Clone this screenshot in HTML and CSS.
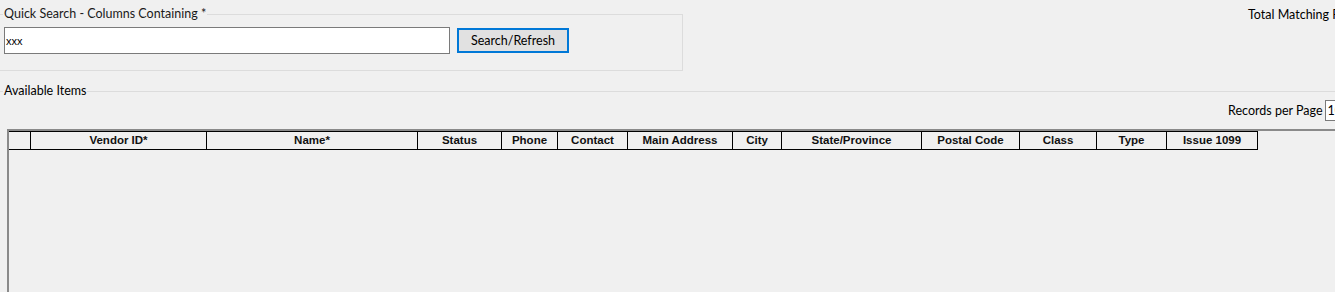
FILE: index.html
```html
<!DOCTYPE html>
<html lang="en">
<head>
    <meta charset="UTF-8">
    <title>Available Items</title>
    <link rel="stylesheet" href="styles.css">
</head>
<body>
    <div class="top">
        <fieldset class="search">
            <legend>Quick Search - Columns Containing *</legend>
            <input class="search-input" type="text" value="xxx">
            <button class="search-btn">Search/Refresh</button>
        </fieldset>
        <div class="total">Total Matching Records: 0</div>
    </div>

    <div class="section-title">Available Items</div>

    <div class="records">
        <span>Records per Page</span>
        <input class="records-input" type="text" value="100">
    </div>

    <div class="grid">
        <div class="grid-head">
            <div class="cell"></div>
            <div class="cell">Vendor ID*</div>
            <div class="cell">Name*</div>
            <div class="cell">Status</div>
            <div class="cell">Phone</div>
            <div class="cell">Contact</div>
            <div class="cell">Main Address</div>
            <div class="cell">City</div>
            <div class="cell">State/Province</div>
            <div class="cell">Postal Code</div>
            <div class="cell">Class</div>
            <div class="cell">Type</div>
            <div class="cell">Issue 1099</div>
        </div>
    </div>
</body>
</html>
```

FILE: styles.css
```css
* {
    margin: 0;
    padding: 0;
    box-sizing: border-box;
}
body {
    background: #f0f0f0;
    font-family: Lato, "Noto Sans", sans-serif;
    font-size: 12.5px;
    color: #000;
    overflow: hidden;
    width: 1335px;
    height: 292px;
}
.top {
    display: flex;
    align-items: flex-start;
}
.search {
    margin-top: 6px;
    width: 683px;
    height: 65px;
    border: 1px solid #dcdcdc;
    border-left: none;
    padding: 5px 0 0 4px;
    display: flex;
    align-items: center;
    gap: 7px;
}
.search legend {
    padding: 0 1px;
    margin-left: -1px;
    line-height: 16px;
    color: #1a1a1a;
}
.search-input {
    width: 446px;
    height: 27px;
    border: 1px solid #7a7a7a;
    background: #fff;
    font-family: "Liberation Sans", Arial, sans-serif;
    font-size: 11px;
    padding: 0 1px;
    outline: none;
    align-self: flex-start;
}
.search-btn {
    width: 112px;
    height: 25px;
    border: 2px solid #0078d7;
    background: #e1e1e1;
    font-family: Lato, "Noto Sans", sans-serif;
    font-size: 12.5px;
    color: #000;
    align-self: flex-start;
    margin-top: 1px;
}
.total {
    margin-left: auto;
    margin-top: 7px;
    width: 87px;
    white-space: nowrap;
    line-height: 16px;
}
.section-title {
    display: flex;
    align-items: center;
    margin-top: 12px;
    line-height: 16px;
}
.section-title::before {
    content: "";
    width: 3px;
    border-top: 1px solid #dcdcdc;
    margin-right: 1px;
}
.section-title::after {
    content: "";
    flex: 1;
    border-top: 1px solid #dcdcdc;
    margin-left: 1px;
}
.records {
    display: flex;
    align-items: center;
    justify-content: flex-start;
    gap: 2px;
    height: 22px;
    margin-top: 0;
    padding-left: 1228px;
    white-space: nowrap;
}
.records-input {
    width: 40px;
    height: 21px;
    border: 1px solid #7a7a7a;
    background: #fff;
    font-family: Lato, "Noto Sans", sans-serif;
    font-size: 12.5px;
    padding: 0 2px;
    flex-shrink: 0;
}
.grid {
    margin: 8px 0 0 7px;
    height: 170px;
    border-top: 2px solid #8a8a8a;
    border-left: 2px solid #8a8a8a;
}
.grid-head {
    display: grid;
    grid-template-columns: 22px 176px 211px 84px 56px 70px 105px 49px 140px 98px 77px 70px 91px;
    border-top: 1px solid #000;
    border-bottom: 1px solid #000;
    width: 1249px;
    height: 19px;
}
.cell {
    border-right: 1px solid #000;
    text-align: center;
    font-family: "Liberation Sans", Arial, sans-serif;
    font-weight: bold;
    font-size: 11.5px;
    line-height: 17px;
    color: #111;
}
```
